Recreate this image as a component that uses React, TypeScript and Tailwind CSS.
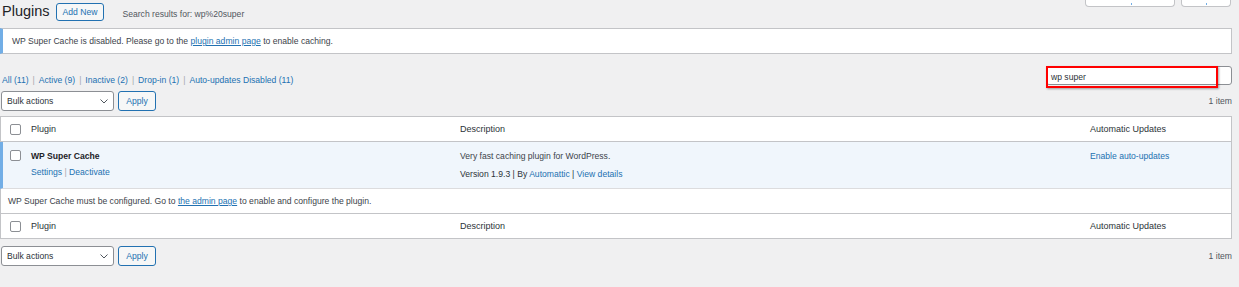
import React from "react";

const Checkbox = () => (
  <span className="block w-[11px] h-[11px] rounded-[2px] border border-[#8c8f94] bg-white" />
);

const Sep = () => <span className="text-[#a7aaad] mx-[4px]">|</span>;

const BulkActions = () => (
  <div className="flex items-center gap-[4px] pl-[1px]">
    <div className="w-[113px] h-[20px] flex items-center justify-between rounded-[3px] border border-[#8c8f94] bg-white pl-[5px] pr-[5px] text-[#2c3338]">
      <span>Bulk actions</span>
      <svg width="8" height="5" viewBox="0 0 8 5" fill="none">
        <path d="M0.5 0.5L4 4L7.5 0.5" stroke="#50575e" strokeWidth="1" />
      </svg>
    </div>
    <button className="h-[20px] w-[38px] rounded-[3px] border border-[#2271b1] bg-[#f6f7f7] text-[#2271b1]">
      Apply
    </button>
  </div>
);

const HeadRow = ({ top }: { top?: boolean }) => (
  <div
    className={`grid grid-cols-[30px_429px_630px_1fr] items-center border-l border-[#c3c4c7] bg-white text-[9px] text-[#2c3338] ${
      top ? "h-[25px] border-b" : "h-[24px]"
    }`}
  >
    <div className="pl-[9px]">
      <Checkbox />
    </div>
    <div>Plugin</div>
    <div>Description</div>
    <div>Automatic Updates</div>
  </div>
);

export default function App() {
  return (
    <div className="w-full h-[287px] overflow-hidden bg-[#f0f0f1] text-[8.6px] leading-[12px] text-[#3c434a] font-['Liberation_Sans',Arial,sans-serif]">
      {/* title bar */}
      <div className="flex items-start h-[28px]">
        <h1 className="pl-[2px] pt-[2px] text-[14.5px] leading-[18px] text-[#1d2327] font-normal">
          Plugins
        </h1>
        <button className="ml-[6px] mt-[3px] h-[18px] px-[6px] rounded-[3px] border border-[#2271b1] bg-[#f6f7f7] text-[#2271b1] text-[8.6px]">
          Add New
        </button>
        <span className="ml-[18px] mt-[8px] text-[#50575e]">
          Search results for: wp%20super
        </span>
        <div className="ml-auto mr-[8px] -mt-[13px] flex gap-[6px]">
          <div className="w-[90px] h-[20px] bg-white border border-t-0 border-[#c3c4c7] rounded-b-[4px] flex justify-center items-end">
            <span className="block w-[1px] h-[2px] bg-[#72aee6] mb-[1px] ml-[3px]" />
          </div>
          <div className="w-[50px] h-[20px] bg-white border border-t-0 border-[#c3c4c7] rounded-b-[4px] flex justify-center items-end">
            <span className="block w-[1px] h-[2px] bg-[#72aee6] mb-[1px] ml-[1px]" />
          </div>
        </div>
      </div>

      {/* notice */}
      <div className="w-[1232px] h-[26px] flex items-center bg-white border border-l-[3px] border-[#c3c4c7] border-l-[#72aee6] pl-[9px]">
        <span>
          WP Super Cache is disabled. Please go to the{" "}
          <a className="text-[#2271b1] underline">plugin admin page</a> to enable caching.
        </span>
      </div>

      {/* filters + search */}
      <div className="flex items-start w-[1232px] mt-[12px] h-[19px]">
        <div className="pl-[2px] pt-[8px] text-[#2271b1]">
          <span>All (11)</span>
          <Sep />
          <span>Active (9)</span>
          <Sep />
          <span>Inactive (2)</span>
          <Sep />
          <span>Drop-in (1)</span>
          <Sep />
          <span>Auto-updates Disabled (11)</span>
        </div>
        <div className="ml-auto relative w-[186px] h-[19px] rounded-[3px] border border-[#8c8f94] bg-white">
          <div className="absolute -left-[1px] -top-[1px] w-[172px] h-[22px] border-2 border-[#ff0000] shadow-[1px_1px_2px_rgba(0,0,0,0.35)] flex items-center pl-[3px] text-[#2c3338]">
            wp super
          </div>
        </div>
      </div>

      {/* top nav */}
      <div className="flex items-center justify-between w-[1232px] mt-[6px] h-[20px]">
        <BulkActions />
        <span className="text-[#50575e]">1 item</span>
      </div>

      {/* table */}
      <div className="w-[1232px] mt-[5px] border-t border-r border-b border-[#c3c4c7]">
        <HeadRow top />
        <div className="grid grid-cols-[28px_429px_630px_1fr] h-[47px] items-start bg-[#f0f6fc] border-l-[3px] border-l-[#72aee6] border-b border-b-[#dcdcde] pt-[8px]">
          <div className="pl-[7px]">
            <Checkbox />
          </div>
          <div>
            <div className="font-bold text-[#1d2327]">WP Super Cache</div>
            <div className="mt-[4px] text-[#2271b1]">
              Settings<span className="text-[#a7aaad]"> | </span>Deactivate
            </div>
          </div>
          <div>
            <div>Very fast caching plugin for WordPress.</div>
            <div className="mt-[6px] text-[#2c3338]">
              Version 1.9.3 | By <a className="text-[#2271b1]">Automattic</a> |{" "}
              <a className="text-[#2271b1]">View details</a>
            </div>
          </div>
          <div className="text-[#2271b1]">Enable auto-updates</div>
        </div>
        <div className="h-[25px] flex items-center bg-white border-l border-[#c3c4c7] border-b pl-[7px]">
          <span>
            WP Super Cache must be configured. Go to{" "}
            <a className="text-[#2271b1] underline">the admin page</a> to enable and configure the plugin.
          </span>
        </div>
        <HeadRow />
      </div>

      {/* bottom nav */}
      <div className="flex items-center justify-between w-[1232px] mt-[7px] h-[20px]">
        <BulkActions />
        <span className="text-[#50575e]">1 item</span>
      </div>
    </div>
  );
}
